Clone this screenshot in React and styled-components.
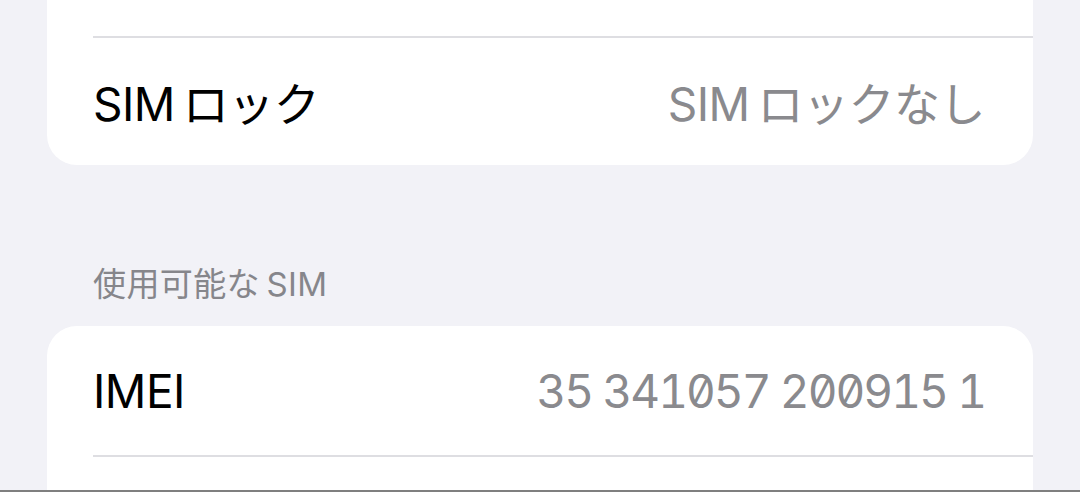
import React from 'react';
import styled, { createGlobalStyle } from 'styled-components';

const GlobalStyle = createGlobalStyle`
  html, body {
    margin: 0;
    padding: 0;
    background: #f2f2f7;
    overflow: hidden;
  }
  body {
    font-family: Inter, "Noto Sans CJK JP", sans-serif;
    -webkit-font-smoothing: antialiased;
  }
  body::after {
    content: '';
    position: fixed;
    left: 0;
    right: 0;
    bottom: 0;
    height: 2px;
    background: #7f7f7f;
  }
`;

const Page = styled.div`
  height: 492px;
  overflow: hidden;
  padding: 0 47px;
  box-sizing: border-box;
`;

const Scroller = styled.div`
  margin-top: -93px;
  display: flex;
  flex-direction: column;
`;

const Card = styled.div`
  background: #fff;
  border-radius: 30px;
  overflow: hidden;
`;

const Row = styled.div`
  height: 129px;
  display: flex;
  align-items: center;
  justify-content: space-between;
  padding: 0 48px 0 46px;
  position: relative;

  & + &::before {
    content: '';
    position: absolute;
    top: 0;
    left: 46px;
    right: 0;
    height: 1.5px;
    background: #dedee2;
  }
`;

const Label = styled.span`
  font-size: 46px;
  color: #000;
  letter-spacing: -0.5px;
`;

const Value = styled.span`
  font-size: 46px;
  color: #8a8a8e;
  letter-spacing: ${p => (p.$num ? '-2px' : '-0.5px')};
  font-feature-settings: ${p => (p.$num ? '"zero" 1, "tnum" 1' : 'normal')};
`;

const SectionHeader = styled.div`
  margin-top: 93px;
  padding: 0 46px 20px;
  font-size: 33px;
  color: #86868b;
  letter-spacing: 0.4px;
`;

export default function App() {
  return (
    <>
      <GlobalStyle />
      <Page>
        <Scroller>
          <Card>
            <Row />
            <Row>
              <Label>SIM{'\u2009'}ロック</Label>
              <Value>SIM{'\u2009'}ロックなし</Value>
            </Row>
          </Card>
          <SectionHeader>使用可能な{'\u2009'}SIM</SectionHeader>
          <Card>
            <Row>
              <Label>IMEI</Label>
              <Value $num>35 341057 200915 1</Value>
            </Row>
            <Row />
          </Card>
        </Scroller>
      </Page>
    </>
  );
}
